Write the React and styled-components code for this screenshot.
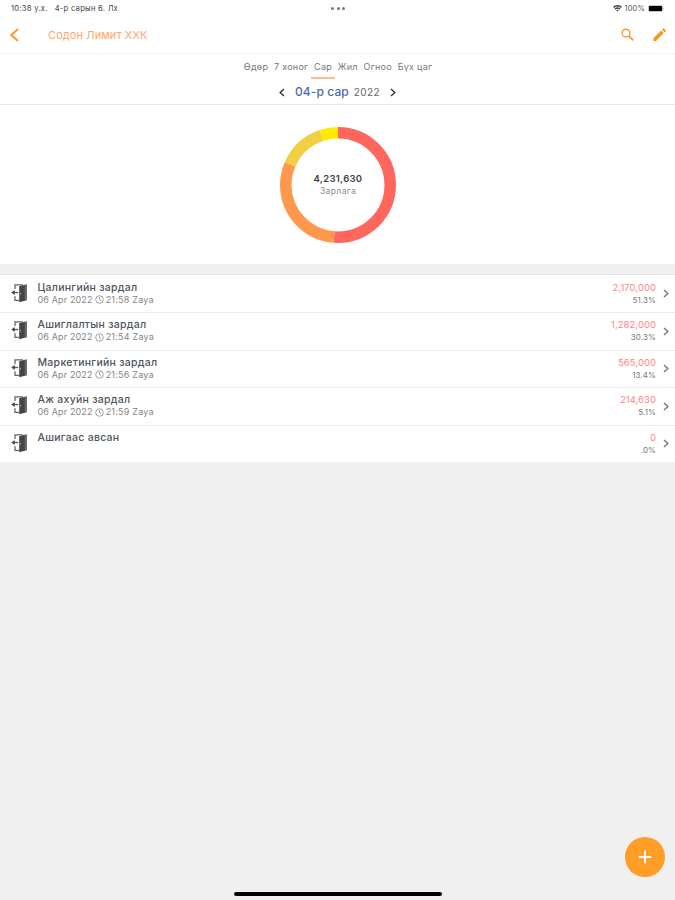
import React from 'react'
import styled, { createGlobalStyle } from 'styled-components'


const GlobalStyle = createGlobalStyle`
  * {
    box-sizing: border-box;
  }

  body {
    margin: 0;
    background: #f0f0f0;
    font-family: Inter, "Noto Sans", sans-serif;
  }
`

const Screen = styled.div`
  position: relative;
  width: 675px;
  height: 900px;
  overflow: hidden;
  background: #f0f0f0;
`

const Text = styled.span`
  font-size: ${({ $size }) => $size}px;
  line-height: 12px;
  letter-spacing: ${({ $track }) => $track || 0}px;
  font-weight: ${({ $weight }) => $weight || 400};
  color: ${({ $color }) => $color || '#555'};
  white-space: pre;
`

const StatusBar = styled.div`
  display: grid;
  grid-template-columns: 1fr auto 1fr;
  align-items: center;
  height: 17px;
  padding: 0 10px 0 11px;
  background: #fff;
`

const StatusLeft = styled.div`
  display: flex;
  gap: 7px;
`

const StatusRight = styled.div`
  display: flex;
  align-items: center;
  justify-content: flex-end;
  gap: 3px;
`

const Dots = styled.div`
  display: flex;
  gap: 2.4px;

  i {
    width: 3px;
    height: 3px;
    border-radius: 50%;
    background: #777;
  }
`

const Header = styled.header`
  display: flex;
  align-items: center;
  height: 37px;
  padding: 0 8px 0 10px;
  background: #fff;
  border-bottom: 1px solid #f3f3f3;
`

const Title = styled(Text)`
  flex: 1;
  margin: 0 0 0 29px;
`

const Actions = styled.div`
  display: flex;
  gap: 16px;
`

const Filters = styled.section`
  height: 51px;
  background: #fff;
  border-bottom: 1px solid #e6e6e6;
`

const Tabs = styled.nav`
  display: flex;
  justify-content: center;
  gap: 5.8px;
  height: 25px;
  padding: 6.5px 0 0 1px;
`

const Tab = styled.div`
  position: relative;
  height: 18.5px;
  display: flex;

  &::after {
    content: "";
    display: ${({ $active }) => ($active ? 'block' : 'none')};
    position: absolute;
    left: -3px;
    right: -3px;
    bottom: 0;
    height: 2px;
    background: #ffbd94;
  }
`

const Period = styled.div`
  display: flex;
  align-items: center;
  justify-content: center;
  height: 26px;
`

const Month = styled(Text)`
  margin: 0 5px 0 10px;
`

const Year = styled(Text)`
  margin-right: 10px;
`

const ChartPanel = styled.section`
  display: grid;
  place-items: center;
  height: 159px;
  padding-left: 1px;
  background: #fff;

  > * {
    grid-area: 1 / 1;
  }
`

const Total = styled.div`
  display: flex;
  flex-direction: column;
  align-items: center;
`

const List = styled.section`
  margin-top: 10px;
  border-top: 1px solid #e4e4e4;
  background: #fff;
`

const Row = styled.div`
  display: flex;
  height: 37.5px;
  padding: 6px 6px 0 11px;

  &:first-child {
    height: 37px;
    padding-top: 6.5px;
  }

  & + & {
    border-top: 1px solid #ececec;
  }
`

const RowIcon = styled.div`
  display: flex;
  height: 22px;
  align-items: center;
`

const RowInfo = styled.div`
  display: flex;
  flex: 1;
  flex-direction: column;
  margin-left: 9.5px;
`

const Meta = styled.div`
  display: flex;
  align-items: center;
  gap: 2px;
`

const RowAmount = styled.div`
  display: flex;
  flex-direction: column;
  align-items: flex-end;
  margin-right: 7px;
`

const RowArrow = styled.div`
  display: flex;
  height: 24px;
  align-items: center;
`

const AddButton = styled.button`
  position: absolute;
  right: 10px;
  bottom: 23px;
  display: grid;
  place-items: center;
  width: 40px;
  height: 40px;
  padding: 0;
  border: none;
  border-radius: 50%;
  background: #ff9d26;
`

const HomeBar = styled.div`
  position: absolute;
  left: 234px;
  bottom: 4.5px;
  width: 208px;
  height: 3.5px;
  border-radius: 2px;
  background: #000;
`


const tabs = [
  { name: 'Өдөр' },
  { name: '7 хоног' },
  { name: 'Сар', active: true },
  { name: 'Жил' },
  { name: 'Огноо' },
  { name: 'Бүх цаг' },
]

const expenses = [
  { name: 'Цалингийн зардал', time: '21:58', amount: '2,170,000', percent: '51.3%' },
  { name: 'Ашиглалтын зардал', time: '21:54', amount: '1,282,000', percent: '30.3%' },
  { name: 'Маркетингийн зардал', time: '21:56', amount: '565,000', percent: '13.4%' },
  { name: 'Аж ахуйн зардал', time: '21:59', amount: '214,630', percent: '5.1%' },
  { name: 'Ашигаас авсан', amount: '0', percent: '.0%' },
]

const slices = [
  { value: 51.2, start: 0, color: '#ff665e' },
  { value: 30.3, start: 51.2, color: '#ff984c' },
  { value: 13.4, start: 81.5, color: '#f0cf42' },
  { value: 5.1, start: 94.9, color: '#ffea00' },
]


function Chevron({ left, color, width = 6, height = 9, stroke = 1.4 }) {
  return (
    <svg width={width} height={height} viewBox={`0 0 ${width} ${height}`} fill="none" stroke={color} strokeWidth={stroke}>
      <path d={left
        ? `M${width - 1} 1L1.2 ${height / 2}L${width - 1} ${height - 1}`
        : `M1 1L${width - 1.2} ${height / 2}L1 ${height - 1}`} />
    </svg>
  )
}

function WifiIcon() {
  return (
    <svg width="9" height="7" viewBox="0 0 9 7" fill="none" stroke="#444" strokeWidth="1.5">
      <path d="M.5 2.4Q4.5-.9 8.5 2.4M2 4.1Q4.5 2.1 7 4.1" />
      <path d="M4.5 6.6L3.2 5.2Q4.5 4.2 5.8 5.2Z" fill="#444" stroke="none" />
    </svg>
  )
}

function BatteryIcon() {
  return (
    <svg width="17" height="7" viewBox="0 0 17 7">
      <rect x=".4" y=".4" width="14.2" height="6.2" rx="1.6" fill="#fff" stroke="#999" strokeWidth=".6" />
      <rect x="1" y=".9" width="13" height="5.2" rx=".9" fill="#000" />
      <path d="M15.4 2.3Q16.8 3.5 15.4 4.7Z" fill="#999" />
    </svg>
  )
}

function SearchIcon() {
  return (
    <svg width="16" height="16" viewBox="0 0 16 16" fill="none" stroke="#ff963c">
      <circle cx="7" cy="6.1" r="3.9" strokeWidth="1.4" />
      <path d="M9.8 9L14.2 13.4" strokeWidth="1.8" />
    </svg>
  )
}

function PencilIcon() {
  return (
    <svg width="16" height="16" viewBox="0 0 16 16" fill="#ff9518">
      <path d="M2.4 13.9V11.3L10.2 3.5L12.8 6.1L5 13.9ZM11 2.7L12.1 1.6Q12.6 1.1 13.1 1.6L14.7 3.2Q15.2 3.7 14.7 4.2L13.6 5.3Z" />
    </svg>
  )
}

function DoorIcon() {
  return (
    <svg width="17" height="20" viewBox="0 0 17 20">
      <path d="M4 6V1.8H12M4 13.3V17.4H8" fill="none" stroke="#666" strokeWidth="1.3" />
      <path d="M8.2 3.3L15.8 1.2V17.2L8.2 19.3Z" fill="#454545" />
      <path d="M14.3 2V17.2" stroke="#888" strokeWidth=".7" />
      <path d="M2.5 9.5H7.2" stroke="#555" strokeWidth="1.3" />
      <path d="M.3 9.5L3.7 6.9V12.1Z" fill="#444" />
      <circle cx="9.5" cy="10.8" r=".6" fill="#ddd" />
    </svg>
  )
}

function ClockIcon() {
  return (
    <svg width="9" height="9" viewBox="0 0 9 9" fill="none" stroke="#8a8a8a" strokeWidth=".8">
      <circle cx="4.5" cy="4.5" r="3.8" />
      <path d="M4.5 2V4.7L6.4 5.7" />
    </svg>
  )
}

function Donut() {
  return (
    <svg width="116" height="116" viewBox="0 0 116 116">
      <g transform="rotate(-90 58 58)" fill="none" strokeWidth="11.5">
        {slices.map(s => (
          <circle
            key={s.color}
            cx="58"
            cy="58"
            r="52.2"
            pathLength="100"
            stroke={s.color}
            strokeDasharray={`${s.value} ${100 - s.value}`}
            strokeDashoffset={-s.start}
          />
        ))}
      </g>
    </svg>
  )
}


export default function App() {
  return <>
    <GlobalStyle />
    <Screen>
      <StatusBar>
        <StatusLeft>
          <Text $size={7.7} $color="#444" $track={0.22}>10:38 у.х.</Text>
          <Text $size={7.7} $color="#444" $track={0.22}>4-р сарын 6. Лх</Text>
        </StatusLeft>
        <Dots><i /><i /><i /></Dots>
        <StatusRight>
          <WifiIcon />
          <Text $size={7.5} $color="#555" $track={0.15}>100%</Text>
          <BatteryIcon />
        </StatusRight>
      </StatusBar>

      <Header>
        <Chevron left color="#ff9828" width={9} height={14} stroke={2} />
        <Title as="h1" $size={11} $color="#ffa56a" $track={0.1}>Содон Лимит ХХК</Title>
        <Actions>
          <SearchIcon />
          <PencilIcon />
        </Actions>
      </Header>

      <Filters>
        <Tabs>
          {tabs.map(t => (
            <Tab key={t.name} $active={t.active}>
              <Text $size={9} $color="#777" $track={0.26}>{t.name}</Text>
            </Tab>
          ))}
        </Tabs>
        <Period>
          <Chevron left color="#333" />
          <Month $size={12} $weight={500} $color="#4a6aa8" $track={0.1}>04-р сар</Month>
          <Year $size={10} $color="#666" $track={0.4}>2022</Year>
          <Chevron color="#333" />
        </Period>
      </Filters>

      <ChartPanel>
        <Donut />
        <Total>
          <Text $size={9.5} $weight={600} $color="#3c4148" $track={0.3}>4,231,630</Text>
          <Text $size={8.7} $color="#8a8d90" $track={0.3}>Зарлага</Text>
        </Total>
      </ChartPanel>

      <List>
        {expenses.map(e => (
          <Row key={e.name}>
            <RowIcon><DoorIcon /></RowIcon>
            <RowInfo>
              <Text $size={10.5} $weight={500} $color="#4e5560" $track={0.28}>{e.name}</Text>
              {e.time && (
                <Meta>
                  <Text $size={9} $color="#858585" $track={0.14}>06 Apr 2022</Text>
                  <ClockIcon />
                  <Text $size={9} $color="#858585" $track={0.22}>{e.time} Zaya</Text>
                </Meta>
              )}
            </RowInfo>
            <RowAmount>
              <Text $size={9.5} $color="#ff8288" $track={0.04}>{e.amount}</Text>
              <Text $size={8} $color="#777" $track={0.1}>{e.percent}</Text>
            </RowAmount>
            <RowArrow><Chevron color="#777" /></RowArrow>
          </Row>
        ))}
      </List>

      <AddButton aria-label="Нэмэх">
        <svg width="14" height="14" viewBox="0 0 14 14" stroke="#fff" strokeWidth="2">
          <path d="M7 .8V13.2M.8 7H13.2" />
        </svg>
      </AddButton>
      <HomeBar />
    </Screen>
  </>
}
